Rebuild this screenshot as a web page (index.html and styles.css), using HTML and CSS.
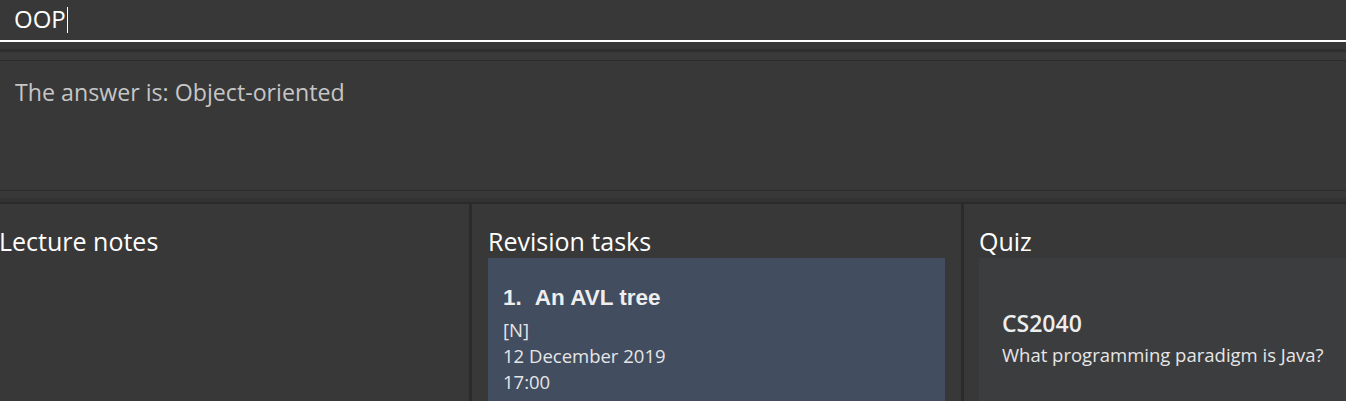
FILE: index.html
```html
<!DOCTYPE html>
<html>
<head>
<meta charset="utf-8">
<link rel="stylesheet" href="styles.css">
</head>
<body>
<div class="app">
  <div class="command"><span class="cmd-text">OOP</span><span class="caret"></span></div>
  <div class="sep sep-top"></div>
  <div class="result">The answer is: Object-oriented</div>
  <div class="sep sep-bottom"></div>
  <div class="panels">
    <section class="panel panel-notes">
      <h2 class="panel-title">Lecture notes</h2>
    </section>
    <section class="panel panel-tasks">
      <h2 class="panel-title">Revision tasks</h2>
      <div class="card task-card">
        <div class="task-title"><span class="task-index">1.</span>An AVL tree</div>
        <div class="task-line">[N]</div>
        <div class="task-line">12 December 2019</div>
        <div class="task-line">17:00</div>
      </div>
    </section>
    <section class="panel panel-quiz">
      <h2 class="panel-title">Quiz</h2>
      <div class="card quiz-card">
        <div class="quiz-module">CS2040</div>
        <div class="quiz-question">What programming paradigm is Java?</div>
      </div>
    </section>
  </div>
</div>
</body>
</html>
```

FILE: styles.css
```css
* { box-sizing: border-box; margin: 0; padding: 0; }
html, body { width: 1346px; height: 401px; overflow: hidden; background: #383838; }
body { font-family: "Open Sans", "Noto Sans", sans-serif; color: #ffffff; }
.app { display: flex; flex-direction: column; height: 401px; overflow: hidden; }
.app > * { flex-shrink: 0; }

.command {
  height: 42px;
  display: flex;
  align-items: flex-start;
  padding: 3px 0 0 14px;
  background: #383838;
  border-bottom: 2px solid #ffffff;
}
.cmd-text { font-size: 24px; line-height: 32px; color: #ffffff; }
.caret { width: 1px; height: 26px; margin-top: 4px; margin-left: 1px; background: #ffffff; }

.sep { background: #3a3a3a; }
.sep-top {
  height: 19px;
  border-top: 7px solid #383838;
  border-bottom: 1px solid #2c2c2c;
  box-shadow: inset 0 3px 0 #2e2e2e;
}
.result {
  height: 129px;
  padding: 16px 15px 0;
  font-size: 23.2px;
  line-height: 30px;
  color: #c6c6c6;
  background: #383838;
}
.sep-bottom {
  height: 14px;
  background: #383838;
  border-top: 1px solid #2c2c2c;
  border-bottom: 2px solid #2a2a2a;
  box-shadow: inset 0 -4px 0 #333333;
}

.panels { height: 197px; display: flex; background: #2b2b2b; overflow: hidden; }
.panel { background: #383838; padding-top: 21px; overflow: hidden; }
.panel-notes { width: 472px; border-right: 3px solid #2b2b2b; }
.panel-tasks { width: 492px; padding-left: 16px; border-right: 3px solid #2b2b2b; }
.panel-quiz { flex: 1; padding-left: 15px; }
.panel-title { font-weight: 400; font-size: 25px; line-height: 32px; color: #ffffff; }
.panel-notes .panel-title { margin-left: -1px; }

.card { margin-top: 1px; height: 143px; }
.task-card { background: #424d5f; padding: 26px 15px 0; width: 457px; }
.task-title { font-family: "Liberation Sans", Arial, sans-serif; font-weight: 700; font-size: 22.5px; line-height: 28px; color: #eeeeee; margin-bottom: 5px; }
.task-index { margin-right: 13px; }
.task-line { font-size: 18.5px; line-height: 26px; color: #e6e6e6; }

.quiz-card { background: #3c3d3f; padding: 50px 0 0 23px; width: 400px; }
.quiz-module { font-weight: 600; font-size: 23px; line-height: 30px; color: #eeeeee; margin-bottom: 4px; }
.quiz-question { font-size: 18.5px; line-height: 26px; color: #e6e6e6; white-space: nowrap; }
```
